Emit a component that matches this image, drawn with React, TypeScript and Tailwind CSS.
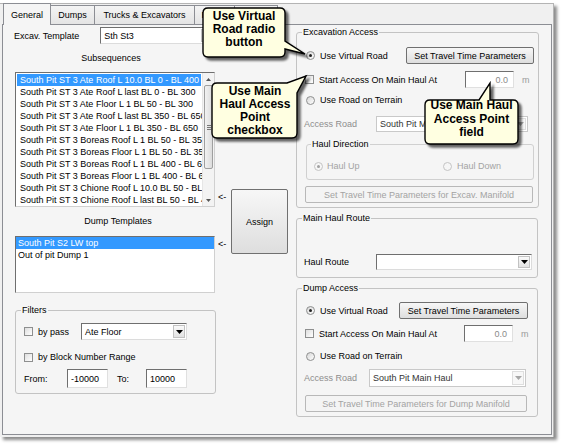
import React from 'react';

const SUBSEQUENCES = [
  'South Pit ST 3 Ate Roof L 10.0 BL 0 - BL 400',
  'South Pit ST 3 Ate Roof L last BL 0 - BL 300',
  'South Pit ST 3 Ate Floor L 1 BL 50 - BL 300',
  'South Pit ST 3 Ate Roof L last BL 350 - BL 650',
  'South Pit ST 3 Ate Floor L 1 BL 350 - BL 650',
  'South Pit ST 3 Boreas Roof L 1 BL 50 - BL 350',
  'South Pit ST 3 Boreas Floor L 1 BL 50 - BL 350',
  'South Pit ST 3 Boreas Roof L 1 BL 400 - BL 650',
  'South Pit ST 3 Boreas Floor L 1 BL 400 - BL 650',
  'South Pit ST 3 Chione Roof L 10.0 BL 50 - BL 400',
  'South Pit ST 3 Chione Roof L last BL 50 - BL 400',
];

const DUMPS = ['South Pit S2 LW top', 'Out of pit Dump 1'];

const TABS = [
  { label: 'General', w: 'w-[48px]', active: true },
  { label: 'Dumps', w: 'w-[45px]' },
  { label: 'Trucks & Excavators', w: 'w-[101px]' },
  { label: 'Roads', w: 'w-[41px]' },
  { label: '', w: 'w-[44px]' },
];

// balloon outlines (box + tail), drawn over the dialog
const CALLOUTS = [
  'M208 8 H280 Q285 8 285 13 V41 L305 54 L285 49 V52 Q285 57 280 57 H208 Q203 57 203 52 V13 Q203 8 208 8 Z',
  'M217 83 H287 L306 76 L297 93 V133 Q297 138 292 138 H217 Q212 138 212 133 V88 Q212 83 217 83 Z',
  'M430 100 H479 L490 83 L490 100 H513 Q518 100 518 105 V139 Q518 144 513 144 H430 Q425 144 425 139 V105 Q425 100 430 100 Z',
];

function Check() {
  return <span className="block w-[9px] h-[9px] shrink-0 border border-[#8e8f8f] bg-gradient-to-br from-[#dedede] to-white" />;
}

function Radio({ checked, disabled }: { checked?: boolean; disabled?: boolean }) {
  return (
    <span
      className={`flex items-center justify-center w-[9px] h-[9px] shrink-0 rounded-full border ${
        disabled ? 'border-[#c4c4c4] bg-[#f6f6f6]' : 'border-[#8e8f8f] bg-gradient-to-br from-[#d6d6d6] to-white'
      }`}
    >
      {checked && <span className={`w-[3px] h-[3px] rounded-full ${disabled ? 'bg-[#a0a0a0]' : 'bg-[#222]'}`} />}
    </span>
  );
}

function Btn({ children, className = '', disabled }: { children: React.ReactNode; className?: string; disabled?: boolean }) {
  return (
    <div
      className={`flex items-center justify-center rounded-[2px] border whitespace-nowrap ${
        disabled
          ? 'border-[#b8b8b8] bg-[#f4f4f4] text-[#a3a3a3]'
          : 'border-[#707070] bg-gradient-to-b from-[#f7f7f7] to-[#dedede] text-black'
      } ${className}`}
    >
      {children}
    </div>
  );
}

function Arrow({ disabled }: { disabled?: boolean }) {
  return (
    <svg width="7" height="4" viewBox="0 0 7 4">
      <path d="M0 0 H7 L3.5 4 Z" fill={disabled ? '#a6a6a6' : '#000'} />
    </svg>
  );
}

function Combo({ text, className = '', disabled }: { text: string; className?: string; disabled?: boolean }) {
  return (
    <div
      className={`flex bg-white border ${
        disabled
          ? 'border-[#c9c9c9] text-[#333]'
          : 'border-t-[#6f6f6f] border-l-[#6f6f6f] border-r-[#dcdcdc] border-b-[#dcdcdc]'
      } ${className}`}
    >
      <span className="flex-1 flex items-center pl-[3px] overflow-hidden whitespace-nowrap">{text}</span>
      <span
        className={`w-[12px] m-[1px] flex items-center justify-center border ${
          disabled ? 'border-[#dedede] bg-[#f7f7f7]' : 'border-[#c2c2c2] bg-gradient-to-b from-[#fafafa] to-[#e2e2e2]'
        }`}
      >
        <Arrow disabled={disabled} />
      </span>
    </div>
  );
}

function TextBox({ value, className = '', right }: { value: string; className?: string; right?: boolean }) {
  return (
    <div
      className={`flex items-center bg-white border border-t-[#6f6f6f] border-l-[#6f6f6f] border-r-[#e0e0e0] border-b-[#e0e0e0] ${
        right ? 'justify-end pr-[5px] text-[#8a8a8a]' : 'pl-[3px]'
      } ${className}`}
    >
      {value}
    </div>
  );
}

function Group({ title, className = '', children }: { title: string; className?: string; children: React.ReactNode }) {
  return (
    <fieldset className={`flex flex-col border border-[#c3c3c3] rounded-[3px] pl-[8px] pr-[4px] ${className}`}>
      <legend className="ml-[-3px] px-[1px] leading-[12px]">{title}</legend>
      {children}
    </fieldset>
  );
}

function AccessBlock({ dump }: { dump?: boolean }) {
  return (
    <>
      <div className={`flex items-center h-[17px] ${dump ? 'mt-[8px]' : 'mt-[9px]'}`}>
        <span className="pl-[1px]"><Radio checked /></span>
        <span className="ml-[5px]">Use Virtual Road</span>
        <Btn className={`ml-auto h-[17px] ${dump ? 'w-[129px] mr-[5px]' : 'w-[128px]'}`}>Set Travel Time Parameters</Btn>
      </div>
      <div className={`flex items-center h-[17px] ${dump ? 'mt-[6px]' : 'mt-[7px]'}`}>
        <Check />
        <span className="ml-[5px]">Start Access On Main Haul At</span>
        <TextBox value="0.0" right className="ml-auto w-[49px] h-[17px]" />
        <span className="ml-[8px] w-[12px] text-[#9a9a9a]">m</span>
      </div>
      <div className={`flex items-center h-[12px] ${dump ? 'mt-[8px]' : 'mt-[6px]'}`}>
        <span className="pl-[1px]"><Radio /></span>
        <span className="ml-[5px]">Use Road on Terrain</span>
      </div>
    </>
  );
}

export default function App() {
  return (
    <div className="relative w-[562px] h-[445px] overflow-hidden bg-white font-['Liberation_Sans',Arial,sans-serif] text-[9px] leading-[12px] text-black">
      <div className="mt-[3px] w-[554px] h-[434px] flex flex-col bg-[#f0f0f0] border-t border-r border-[#b4b4b4] shadow-[3px_3px_3px_rgba(0,0,0,0.45)]">
        {/* tab strip */}
        <div className="h-[20px] flex items-end pl-[3px]">
          {TABS.map((t) => (
            <div
              key={t.label || 'blank'}
              className={`${t.w} -mr-[1px] flex items-center justify-center border border-b-0 border-[#8c8e94] ${
                t.active ? 'relative z-10 h-[22px] -mb-[1px] bg-[#f5f5f5]' : 'h-[19px] bg-gradient-to-b from-[#f4f4f4] to-[#e4e4e4]'
              }`}
            >
              {t.label}
            </div>
          ))}
        </div>

        {/* tab page */}
        <div className="ml-[2px] w-[550px] h-[411px] border border-[#8c8e94] bg-[#f5f5f5] flex pl-[12px]">
          {/* left column */}
          <div className="w-[200px] flex flex-col pt-[2px]">
            <div className="flex items-center h-[17px]">
              <span className="w-[87px] -ml-[1px]">Excav. Template</span>
              <Combo text="Sth St3" className="w-[116px] h-[17px]" />
            </div>
            <div className="mt-[8px] h-[12px] text-center pr-[8px]">Subsequences</div>
            <div className="mt-[8px] h-[135px] flex bg-white border border-t-[#6f6f6f] border-l-[#6f6f6f] border-r-[#d0d0d0] border-b-[#d0d0d0]">
              <div className="flex-1 p-[1px] overflow-hidden">
                {SUBSEQUENCES.map((s, i) => (
                  <div
                    key={s}
                    className={`h-[12px] pl-[3px] whitespace-nowrap ${i === 0 ? 'bg-[#3399ff] text-white' : ''}`}
                  >
                    {s}
                  </div>
                ))}
              </div>
              <div className="w-[12px] flex flex-col items-center bg-[#f3f3f3] border-l border-[#e6e6e6]">
                <div className="h-[12px] flex items-center justify-center">
                  <svg width="5" height="3" viewBox="0 0 5 3"><path d="M0 3 H5 L2.5 0 Z" fill="#555" /></svg>
                </div>
                <div className="w-[9px] h-[84px] flex flex-col items-center justify-center gap-[1px] rounded-[2px] border border-[#9f9f9f] bg-gradient-to-r from-[#f2f2f2] to-[#dcdcdc]">
                  <span className="w-[4px] h-px bg-[#777]" />
                  <span className="w-[4px] h-px bg-[#777]" />
                  <span className="w-[4px] h-px bg-[#777]" />
                </div>
                <div className="mt-auto h-[12px] flex items-center justify-center">
                  <svg width="5" height="3" viewBox="0 0 5 3"><path d="M0 0 H5 L2.5 3 Z" fill="#555" /></svg>
                </div>
              </div>
            </div>
            <div className="mt-[8px] h-[12px] text-center pl-[6px]">Dump Templates</div>
            <div className="mt-[9px] h-[57px] bg-white border border-t-[#6f6f6f] border-l-[#6f6f6f] border-r-[#d0d0d0] border-b-[#d0d0d0]">
              {DUMPS.map((d, i) => (
                <div key={d} className={`h-[12px] pl-[2px] ${i === 0 ? 'bg-[#3399ff] text-white' : ''}`}>
                  {d}
                </div>
              ))}
            </div>
            <Group title="Filters" className="mt-[11px] h-[90px] w-[201px]">
              <div className="mt-[7px] h-[17px] flex items-center">
                <Check />
                <span className="ml-[5px] w-[43px]">by pass</span>
                <Combo text="Ate Floor" className="w-[106px] h-[17px]" />
              </div>
              <div className="mt-[11px] h-[12px] flex items-center">
                <Check />
                <span className="ml-[5px]">by Block Number Range</span>
              </div>
              <div className="mt-[6px] h-[19px] flex items-center">
                <span className="w-[43px]">From:</span>
                <TextBox value="-10000" className="w-[41px] h-[19px]" />
                <span className="ml-[9px] w-[29px]">To:</span>
                <TextBox value="10000" className="w-[41px] h-[19px]" />
              </div>
            </Group>
          </div>

          {/* arrows + assign */}
          <div className="w-[81px] flex pl-[3px]">
            <div className="w-[13px] flex flex-col">
              <span className="mt-[166px] h-[12px]">&lt;-</span>
              <span className="mt-[35px] h-[12px]">&lt;-</span>
            </div>
            <Btn className="mt-[164px] w-[57px] h-[65px]">Assign</Btn>
          </div>

          {/* right column */}
          <div className="w-[242px] flex flex-col pt-[1px]">
            <Group title="Excavation Access" className="h-[182px]">
              <AccessBlock />
              <div className="mt-[10px] h-[16px] flex items-center">
                <span className="w-[72px] -ml-[1px] text-[#8d8d8d]">Access Road</span>
                <Combo text="South Pit Main Haul" disabled className="w-[152px] h-[16px]" />
              </div>
              <fieldset className="mt-[6px] ml-[1px] w-[228px] h-[42px] border border-[#d0d0d0] rounded-[3px] pl-[7px] flex flex-col">
                <legend className="ml-[-3px] px-[1px] leading-[12px]">Haul Direction</legend>
                <div className="mt-[10px] h-[12px] flex items-center text-[#a3a3a3]">
                  <div className="w-[129px] flex items-center">
                    <Radio checked disabled />
                    <span className="ml-[4px]">Haul Up</span>
                  </div>
                  <Radio disabled />
                  <span className="ml-[5px]">Haul Down</span>
                </div>
              </fieldset>
              <Btn disabled className="mt-[6px] w-[228px] h-[17px]">Set Travel Time Parameters for Excav. Manifold</Btn>
            </Group>

            <Group title="Main Haul Route" className="mt-[4px] h-[66px]">
              <div className="mt-[30px] h-[16px] flex items-center">
                <span className="w-[72px] -ml-[1px]">Haul Route</span>
                <Combo text="" className="w-[156px] h-[16px]" />
              </div>
            </Group>

            <Group title="Dump Access" className="mt-[4px] h-[135px]">
              <AccessBlock dump />
              <div className="mt-[7px] h-[18px] flex items-center">
                <span className="w-[65px] -ml-[1px] text-[#8d8d8d]">Access Road</span>
                <Combo text="South Pit Main Haul" disabled className="w-[157px] h-[18px]" />
              </div>
              <Btn disabled className="mt-[8px] w-[222px] h-[17px]">Set Travel Time Parameters for Dump Manifold</Btn>
            </Group>
          </div>
        </div>
      </div>

      {/* help balloons */}
      <svg className="absolute left-0 top-0 pointer-events-none" width="562" height="445">
        <defs>
          <filter id="balloon-shadow" x="-20%" y="-20%" width="140%" height="150%">
            <feDropShadow dx="3" dy="3" stdDeviation="1" floodColor="#000" floodOpacity="0.6" />
          </filter>
        </defs>
        {CALLOUTS.map((d) => (
          <path key={d} d={d} fill="#ffffe1" stroke="#000" strokeWidth="1.4" filter="url(#balloon-shadow)" />
        ))}
      </svg>
      <div className="absolute left-[203px] top-[10px] w-[82px] text-center font-bold text-[12px] leading-[13px]">
        Use Virtual<br />Road radio<br />button
      </div>
      <div className="absolute left-[212px] top-[85px] w-[86px] text-center font-bold text-[12px] leading-[13px]">
        Use Main<br />Haul Access<br />Point<br />checkbox
      </div>
      <div className="absolute left-[425px] top-[99px] w-[93px] text-center font-bold text-[12px] leading-[13.5px]">
        Use Main Haul<br />Access Point<br />field
      </div>
    </div>
  );
}
